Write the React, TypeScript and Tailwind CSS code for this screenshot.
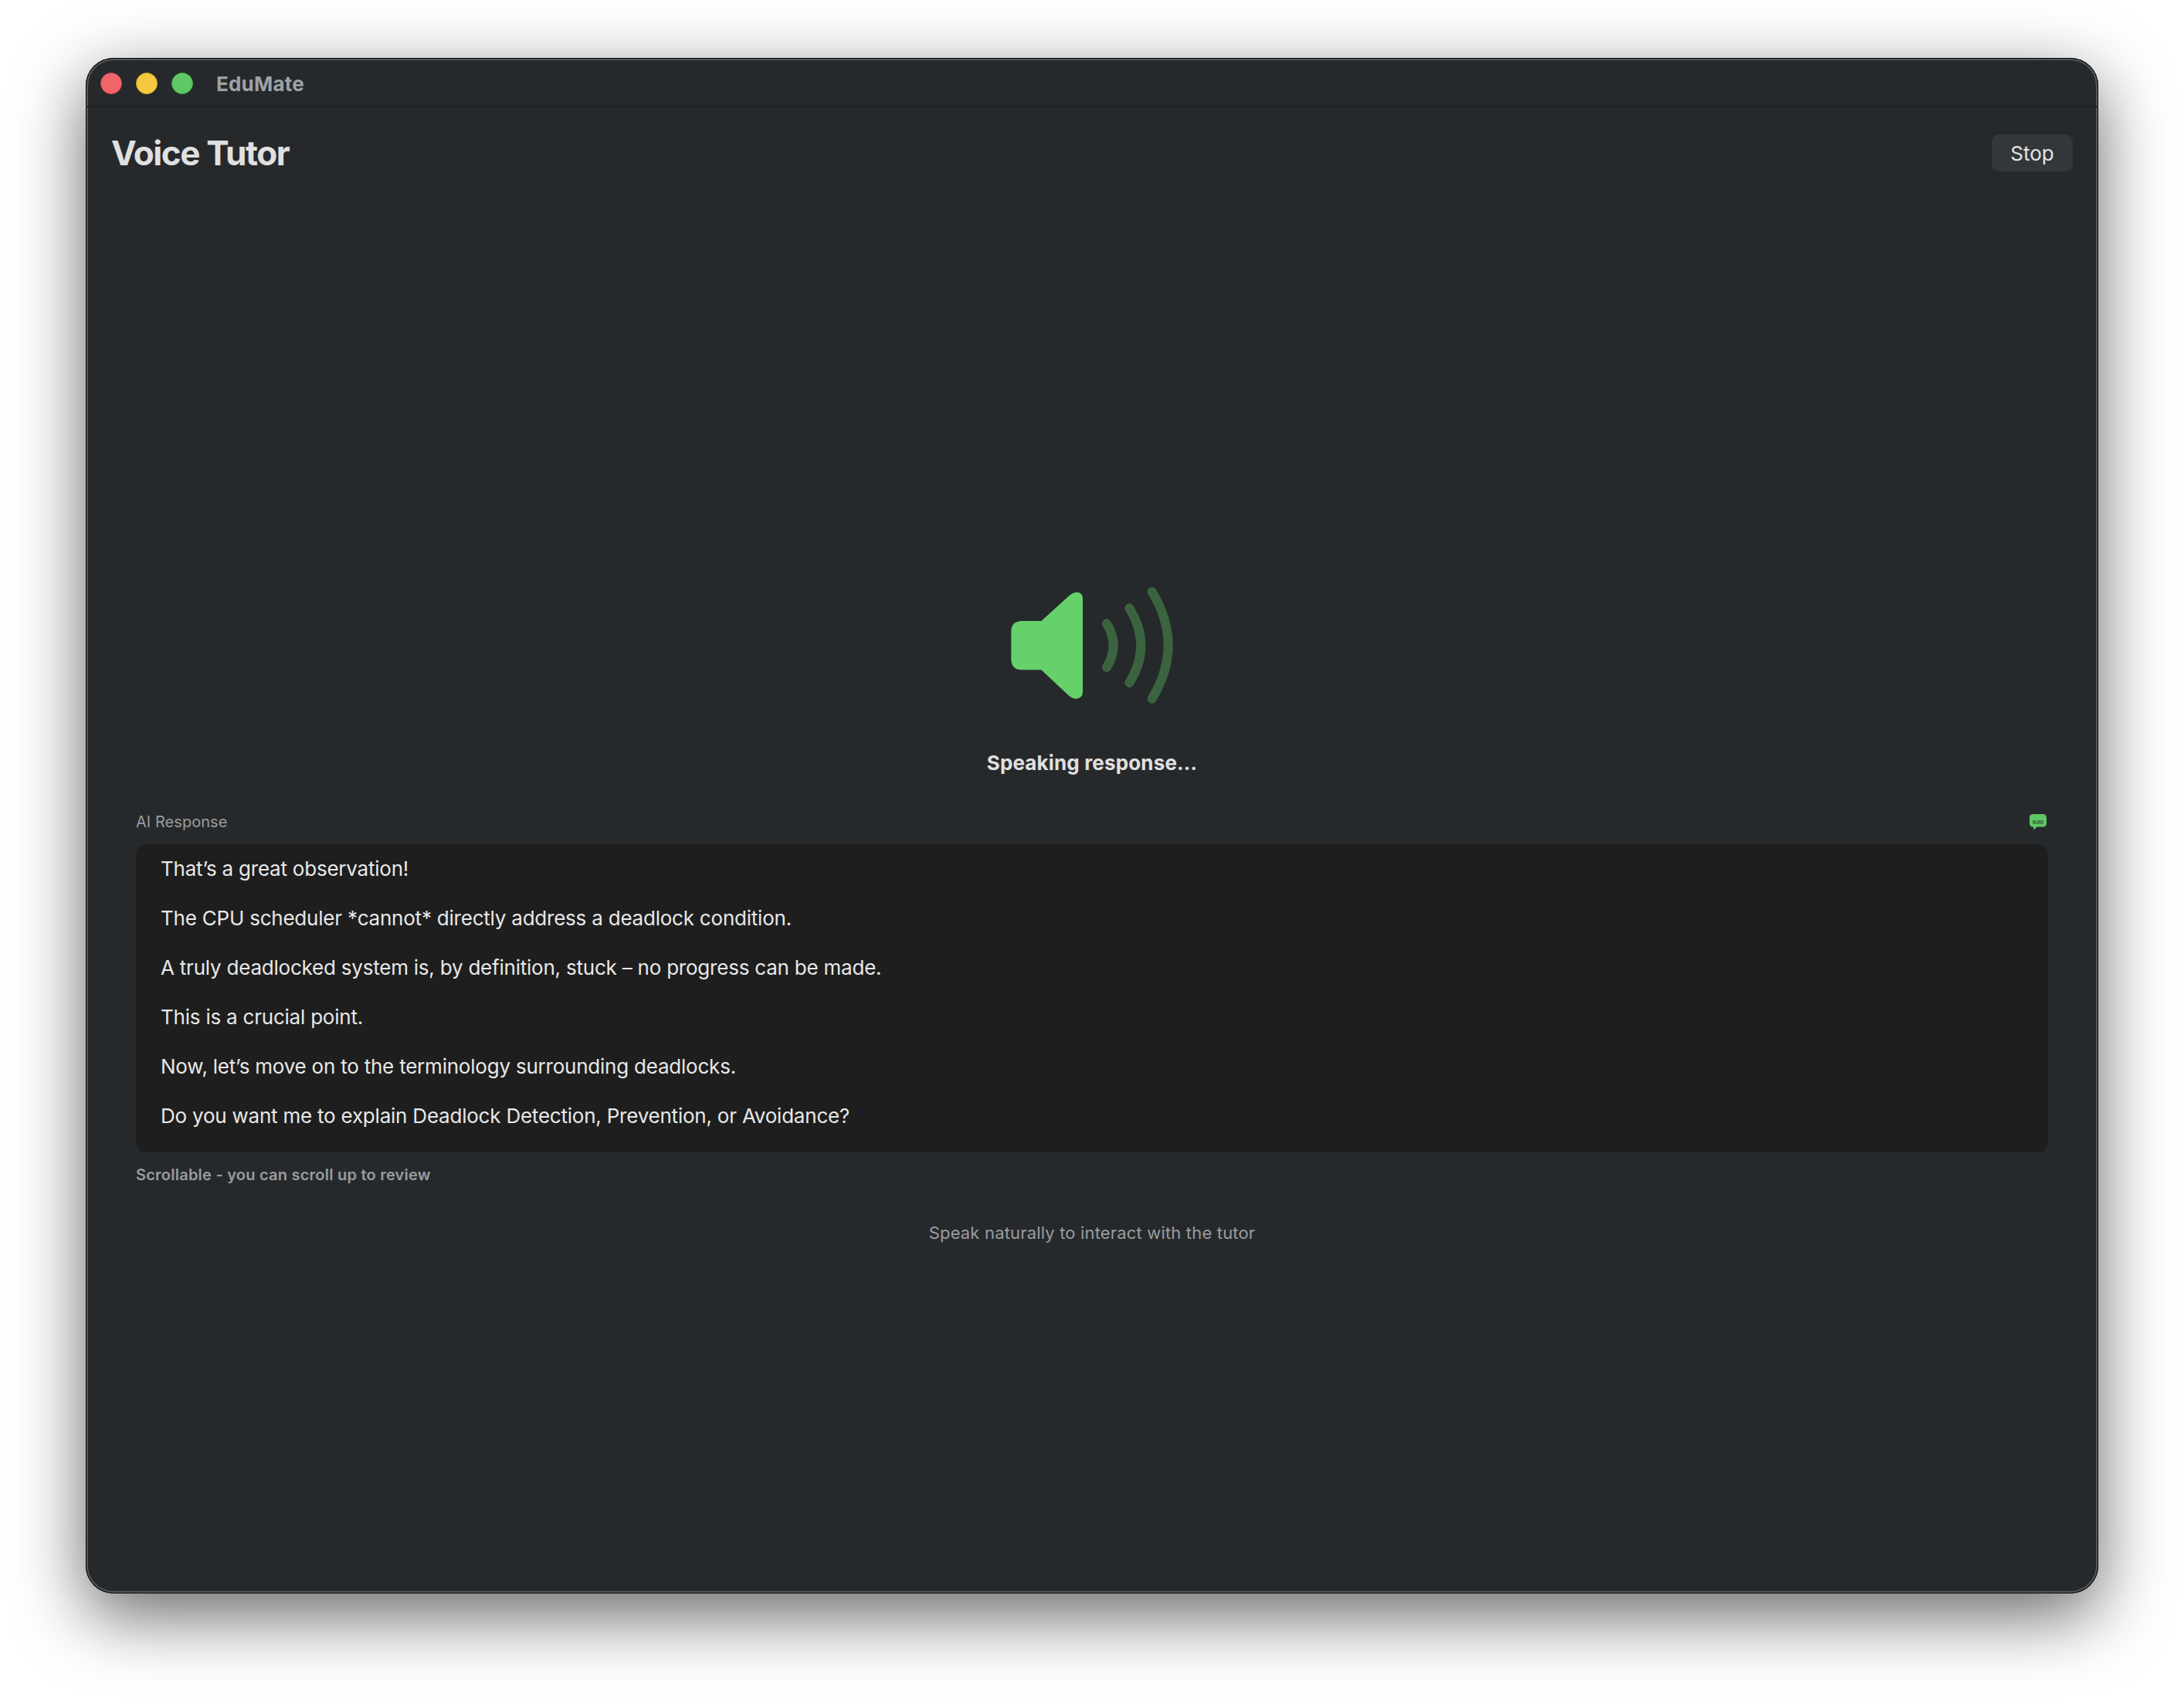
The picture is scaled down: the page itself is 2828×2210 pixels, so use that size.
import React from 'react';

const lines = [
  'That’s a great observation!',
  'The CPU scheduler *cannot* directly address a deadlock condition.',
  'A truly deadlocked system is, by definition, stuck – no progress can be made.',
  'This is a crucial point.',
  'Now, let’s move on to the terminology surrounding deadlocks.',
  'Do you want me to explain Deadlock Detection, Prevention, or Avoidance?',
];

const SpeakerIcon = () => (
  <svg width="270" height="180" viewBox="0 0 810 540" fill="none" className="translate-x-[1px]">
    <path
      d="M130 192H205L315 92Q330 80 345 80Q366 82 366 105V468Q366 492 340 494Q325 494 310 480L205 382H130Q88 382 88 340V234Q88 192 130 192Z"
      fill="#66d06a"
    />
    <g stroke="#3b633f" strokeWidth="36" strokeLinecap="round">
      <path d="M459 202Q511 287 459 372" />
      <path d="M547 142Q637 287 547 432" />
      <path d="M635 78Q761 286 635 494" />
    </g>
  </svg>
);

const BubbleIcon = () => (
  <svg width="22" height="21" viewBox="0 0 22 21">
    <path
      d="M5 0H17Q22 0 22 5V12Q22 16.500 17 16.500H10L5 20.500V16.500Q0 16.500 0 12V5Q0 0 5 0Z"
      fill="#5fc765"
    />
    <path d="M4 9H8M10 9H18" stroke="#27302b" strokeWidth="1" />
    <path d="M4 11.500H18" stroke="#3b7040" strokeWidth="2" />
  </svg>
);

export default function App() {
  return (
    <div className="w-[2828px] h-[2210px] bg-white pt-[75px] pl-[111px] font-['Inter',sans-serif] overflow-hidden">
      <div className="w-[2606px] h-[1988px] rounded-[36px] bg-[#26292c] flex flex-col overflow-hidden shadow-[inset_0_0_0_1px_#000,inset_0_0_0_3px_#55585b,0_28px_90px_rgba(0,0,0,0.6)]">
        <div className="h-[64px] shrink-0 flex items-center pl-[19px] pt-[4px] border-b-2 border-[#1f2123]">
          <div className="flex gap-[18px]">
            <div className="w-[28px] h-[28px] rounded-full bg-[#f1666a] border border-[#d9494d]" />
            <div className="w-[28px] h-[28px] rounded-full bg-[#f4c93f] border border-[#d9a92b]" />
            <div className="w-[28px] h-[28px] rounded-full bg-[#5fc765] border border-[#45a94b]" />
          </div>
          <div className="ml-[30px] text-[26px] font-bold tracking-[0.2px] text-[#9ea2a6]">EduMate</div>
        </div>

        <div className="flex items-center justify-between pl-[33px] pr-[33px] pt-[33px]">
          <div className="text-[44px] leading-[52px] font-bold tracking-[-1.4px] text-[#e0e0e0]">Voice Tutor</div>
          <button className="w-[105px] h-[48px] rounded-[10px] bg-[#33373a] text-[26px] text-[#e5e5e5]">Stop</button>
        </div>

        <div className="flex flex-col items-center pt-[516px]">
          <SpeakerIcon />
          <div className="mt-[52px] text-[26px] leading-[32px] font-bold tracking-[0.15px] text-[#e0e0e0]">Speaking response…</div>
        </div>

        <div className="px-[65px] mt-[48px]">
          <div className="flex items-center justify-between h-[24px] pr-[2px]">
            <span className="text-[20px] tracking-[0.05px] text-[#9a9c9f]">AI Response</span>
            <BubbleIcon />
          </div>
          <div className="mt-[17px] h-[399px] rounded-[14px] bg-[#1e1e1e] pl-[32px] pt-[16px] flex flex-col gap-[32px]">
            {lines.map((line, i) => (
              <p key={i} className="text-[26px] leading-[32px] tracking-[-0.22px] text-[#e8e8e8]">{line}</p>
            ))}
          </div>
          <div className="mt-[17px] text-[20px] leading-[24px] font-semibold tracking-[0.23px] text-[#9a9c9f]">
            Scrollable - you can scroll up to review
          </div>
        </div>

        <div className="mt-[50px] text-center text-[22px] leading-[26px] tracking-[0.17px] text-[#9a9c9f]">
          Speak naturally to interact with the tutor
        </div>
      </div>
    </div>
  );
}
